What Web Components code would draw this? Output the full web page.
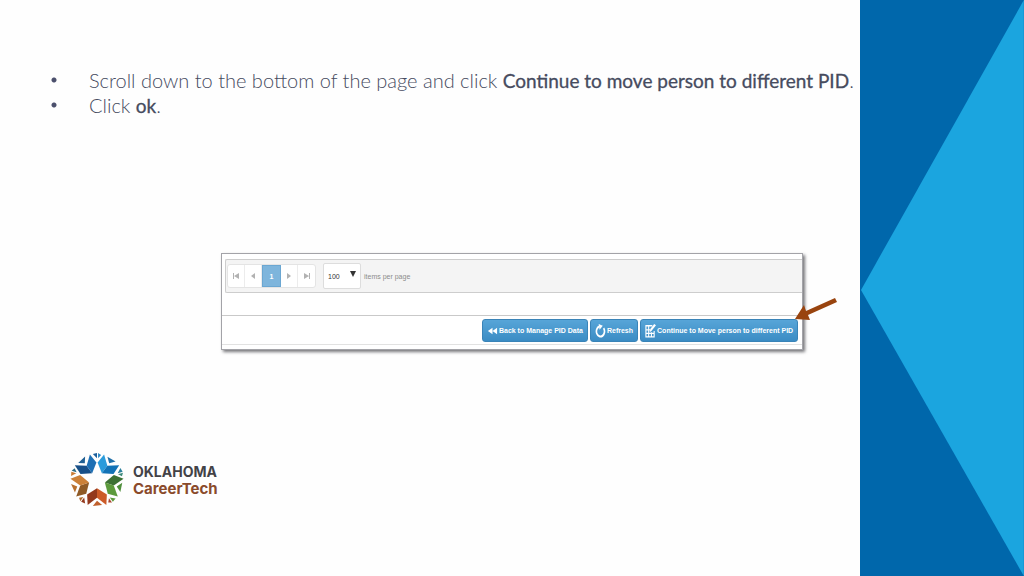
<!DOCTYPE html>
<html lang="en">
<head>
<meta charset="utf-8">
<title>Move person to different PID</title>
<style>
    body {
        margin: 0;
        background: #fefefe;
        font-family: Lato, "Open Sans", sans-serif;
    }
    b {
        font-size: 19px;
        font-weight: 400;
        -webkit-text-stroke: 0.3px currentColor;
    }
</style>
</head>
<body>
<slide-page>
    <step-list slot="steps">
        <li>Scroll down to the bottom of the page and click <b>Continue to move person to different PID</b>.</li>
        <li>Click <b>ok</b>.</li>
    </step-list>
    <pid-panel slot="figure">
        <pager-bar></pager-bar>
        <tool-button slot="actions" icon="back">Back to Manage PID Data</tool-button>
        <tool-button slot="actions" icon="refresh">Refresh</tool-button>
        <tool-button slot="actions" icon="edit">Continue to Move person to different PID</tool-button>
    </pid-panel>
    <career-logo slot="logo"></career-logo>
</slide-page>

<script>
class SlidePage extends HTMLElement {
    constructor() {
        super();
        this.attachShadow({ mode: 'open' });
        this.shadowRoot.innerHTML = `
            <style>
                :host {
                    display: grid;
                    grid-template-columns: minmax(0, 1fr) 16%;
                    min-height: 100vh;
                }
                main {
                    display: flex;
                    flex-direction: column;
                    box-sizing: border-box;
                    padding: 68px 0 68px 50px;
                }
                .figure {
                    padding: 135px 57px 0 171px;
                }
                .logo {
                    margin-top: auto;
                    padding-left: 19px;
                }
                .side {
                    position: relative;
                    background: #0067ab;
                }
                .side svg {
                    position: absolute;
                    inset: 0;
                    width: 100%;
                    height: 100%;
                }
            </style>
            <main>
                <slot name="steps"></slot>
                <div class="figure"><slot name="figure"></slot></div>
                <div class="logo"><slot name="logo"></slot></div>
            </main>
            <div class="side">
                <svg viewBox="0 0 164 576" preserveAspectRatio="none" aria-hidden="true">
                    <path d="M164 0V576L1 290Z" fill="#1ba5df"/>
                </svg>
            </div>
        `;
    }
}

class StepList extends HTMLElement {
    constructor() {
        super();
        this.attachShadow({ mode: 'open' });
        this.shadowRoot.innerHTML = `
            <style>
                :host {
                    display: block;
                    color: #464b5e;
                    font-size: 20px;
                    font-weight: 300;
                    line-height: 25px;
                    white-space: nowrap;
                }
                ul {
                    margin: 0;
                    padding: 0;
                    list-style: none;
                }
                ::slotted(li) {
                    display: block;
                    padding-left: 39px;
                    background: radial-gradient(circle at 4px 12px, #4b4f6c 2px, transparent 3px);
                }
            </style>
            <ul><slot></slot></ul>
        `;
    }
}

class PidPanel extends HTMLElement {
    constructor() {
        super();
        this.attachShadow({ mode: 'open' });
        this.shadowRoot.innerHTML = `
            <style>
                :host {
                    display: block;
                    position: relative;
                    border: 1px solid #a3a3a8;
                    background: #fff;
                    box-shadow: 2px 2px 3px #77777b;
                    font-family: "Liberation Sans", sans-serif;
                    font-size: 7px;
                }
                .grid {
                    padding: 5px 0 22px 3px;
                    border-bottom: 1px solid #c9c9c9;
                }
                .actions {
                    display: flex;
                    justify-content: flex-end;
                    gap: 2px;
                    padding: 3px 4px 2px;
                    border-bottom: 1px solid #e2e2e2;
                    margin-bottom: 4px;
                }
                .arrow {
                    position: absolute;
                    right: -36px;
                    bottom: 26px;
                    width: 44px;
                    height: 26px;
                }
            </style>
            <div class="grid"><slot></slot></div>
            <div class="actions"><slot name="actions"></slot></div>
            <svg class="arrow" viewBox="0 0 44 26" aria-hidden="true">
                <path d="M1 22L10 8L12 14L41 1L43 5L14 18L16 23Z" fill="#99440f"/>
            </svg>
        `;
    }
}

class PagerBar extends HTMLElement {
    constructor() {
        super();
        this.attachShadow({ mode: 'open' });
        this.shadowRoot.innerHTML = `
            <style>
                :host {
                    display: flex;
                    align-items: center;
                    gap: 3px;
                    padding: 3px 1px;
                    border: 1px solid #cdcdcd;
                    border-right: 0;
                    border-radius: 2px 0 0 2px;
                    background: #f4f4f4;
                    color: #8c8c8c;
                }
                nav {
                    display: grid;
                    grid-template-columns: 17px 17px 19px 17px 17px;
                    margin-right: 4px;
                    border: 1px solid #e4e4e4;
                    border-radius: 3px;
                    background: #fff;
                }
                button {
                    display: grid;
                    place-items: center;
                    height: 22px;
                    padding: 0;
                    border: 0;
                    border-right: 1px solid #ececec;
                    background: none;
                    color: #b2b2b2;
                    font: inherit;
                }
                button:last-child {
                    border-right: 0;
                }
                button.current {
                    border: 1px solid #6ba7d2;
                    background: #7eb5dc;
                    color: #fff;
                    font-weight: bold;
                }
                svg {
                    width: 8px;
                    height: 8px;
                    fill: currentColor;
                }
                .size {
                    position: relative;
                    display: flex;
                }
                select {
                    appearance: none;
                    width: 38px;
                    height: 26px;
                    padding: 0 4px;
                    border: 1px solid #ddd;
                    border-radius: 2px;
                    background: #fff;
                    color: #333;
                    font: inherit;
                }
                .size svg {
                    position: absolute;
                    right: 4px;
                    top: 7px;
                    color: #333;
                    pointer-events: none;
                }
            </style>
            <nav aria-label="Pages">
                <button type="button" aria-label="First page"><svg viewBox="0 0 8 8"><path d="M1 1h1v6h-1zM7 1v6L2 4z"/></svg></button>
                <button type="button" aria-label="Previous page"><svg viewBox="0 0 8 8"><path d="M6 1v6L2 4z"/></svg></button>
                <button type="button" class="current">1</button>
                <button type="button" aria-label="Next page"><svg viewBox="0 0 8 8"><path d="M2 1v6l4-3z"/></svg></button>
                <button type="button" aria-label="Last page"><svg viewBox="0 0 8 8"><path d="M6 1h1v6h-1zM1 1v6l5-3z"/></svg></button>
            </nav>
            <span class="size">
                <select id="size"><option>100</option></select>
                <svg viewBox="0 0 8 8"><path d="M1 1h6L4 7z"/></svg>
            </span>
            <label for="size">items per page</label>
        `;
    }
}

const ICONS = {
    back: '<path d="M6 2v8L1 6zM11 2v8L6 6z" fill="#fff"/>',
    refresh: '<path d="M4.5 2.2A4.4 4.4 0 1 0 9.4 3.6" fill="none" stroke="#fff" stroke-width="1.8"/><path d="M4 0l4.5 1.5L5 5z" fill="#fff"/>',
    edit: '<path d="M8 1.5H1V11h9V6M1 5h5M1 8h9M4 2v9M7 7v4" fill="none" stroke="#fff" stroke-width="1.2"/><path d="M5 7l1-3 4-4 2 1-5 5z" fill="#fff"/>'
};

class ToolButton extends HTMLElement {
    constructor() {
        super();
        this.attachShadow({ mode: 'open' });
        const icon = this.getAttribute('icon');
        this.shadowRoot.innerHTML = `
            <style>
                :host {
                    display: block;
                }
                button {
                    display: flex;
                    align-items: center;
                    gap: 1px;
                    height: 23px;
                    padding: 0 4px;
                    border: 1px solid #3a84b8;
                    border-radius: 3px;
                    background: linear-gradient(#57a5d8, #3b8cc4);
                    color: #fff;
                    font: inherit;
                    font-weight: bold;
                    white-space: nowrap;
                }
                svg {
                    width: 11px;
                    height: 14px;
                }
                svg.back {
                    height: 10px;
                }
            </style>
            <button type="button">
                <svg class="${icon}" viewBox="0 0 12 12" preserveAspectRatio="none" aria-hidden="true">${ICONS[icon]}</svg>
                <span><slot></slot></span>
            </button>
        `;
    }
}

class CareerLogo extends HTMLElement {
    constructor() {
        super();
        this.attachShadow({ mode: 'open' });
        this.shadowRoot.innerHTML = `
            <style>
                :host {
                    display: flex;
                    align-items: center;
                    gap: 8px;
                    color: #434247;
                    font-family: Inter, sans-serif;
                    font-weight: 700;
                }
                svg {
                    width: 56px;
                    height: 56px;
                }
                span {
                    display: block;
                }
                .name {
                    font-size: 14px;
                    line-height: 17px;
                }
                .sub {
                    color: #8a4a2b;
                    font-size: 15px;
                    line-height: 18px;
                }
            </style>
            <svg viewBox="-27 -27 54 54" aria-hidden="true"></svg>
            <div><span class="name">OKLAHOMA</span><span class="sub">CareerTech</span></div>
        `;
        // five folded leaves around a white star: angle, left and right half, chip in the fold, two chips at the star's point
        const leaves = [
            [-36, '#174f88', '#1d6fb4', '#1f5f93', '#1d5f9c', '#2a86c4'],
            [36, '#2a9bdb', '#1272b6', '#1f6fa8', '#2b7f9b', '#3c8a7a'],
            [108, '#3c7034', '#5c9a3c', '#4f8f3c', '#5c9a3c', '#a8442c'],
            [180, '#cc5a27', '#93381c', '#c0602c', '#93381c', '#b06a2c'],
            [-108, '#8f5a26', '#cb8038', '#b8702f', '#c87a33', '#2c6a80']
        ];
        this.shadowRoot.querySelector('svg').innerHTML = leaves.map(([angle, left, right, fold, tipA, tipB]) => `
            <g transform="rotate(${angle})">
                <path d="M0 -8L-9.5 -14L-9 -24L0 -17Z" fill="${left}"/>
                <path d="M0 -8L9.5 -14L9 -24L0 -17Z" fill="${right}"/>
                <path d="M-5 -24L4 -25L0 -20Z" fill="${fold}"/>
                <g transform="rotate(36)">
                    <path d="M-4 -25L0 -26V-21Z" fill="${tipA}"/>
                    <path d="M1 -26L4 -24L1 -21Z" fill="${tipB}"/>
                </g>
            </g>
        `).join('');
    }
}

customElements.define('slide-page', SlidePage);
customElements.define('step-list', StepList);
customElements.define('pid-panel', PidPanel);
customElements.define('pager-bar', PagerBar);
customElements.define('tool-button', ToolButton);
customElements.define('career-logo', CareerLogo);
</script>
</body>
</html>
